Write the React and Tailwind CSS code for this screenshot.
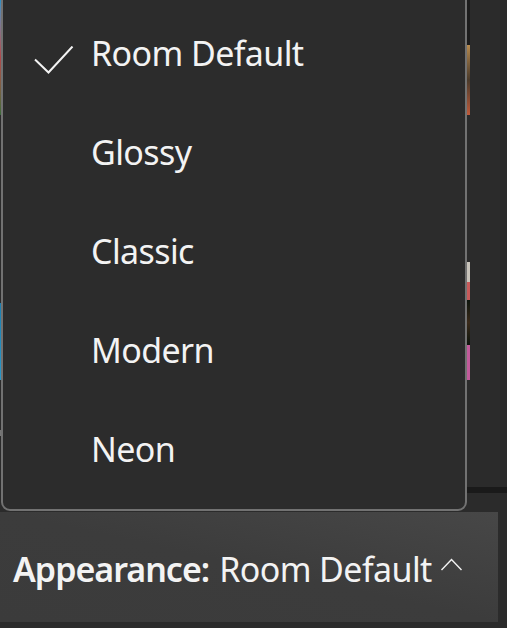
import React from "react";

const items = ["Room Default", "Glossy", "Classic", "Modern", "Neon"];

export default function App() {
  return (
    <div
      className="relative w-[507px] h-[628px] overflow-hidden bg-[#2b2b2b] text-[#f3f3f3]"
      style={{ fontFamily: '"Noto Sans", "Open Sans", sans-serif' }}
    >
      {/* background content: left edge strip */}
      <div className="absolute left-0 top-0 w-[2px] h-[490px] flex flex-col">
        <div className="h-[115px] bg-gradient-to-b from-[#2a8fc4] via-[#b0474a] to-[#3a6a3a]" />
        <div className="h-[188px] bg-[#2b2b2b]" />
        <div className="h-[77px] bg-gradient-to-b from-[#1c7fb0] to-[#2a97c8]" />
        <div className="h-[50px] bg-[#2b2b2b]" />
        <div className="h-[6px] bg-[#777]" />
      </div>
      {/* background content: right side strip */}
      <div className="absolute left-[467px] top-0 w-[3px] flex flex-col">
        <div className="h-[45px] bg-[#1c1c1c]" />
        <div className="h-[70px] bg-gradient-to-b from-[#b78a4e] via-[#4a3a2a] to-[#c05a3a]" />
        <div className="h-[147px] bg-[#2b2b2b]" />
        <div className="h-[20px] bg-[#c9c4bb]" />
        <div className="h-[18px] bg-[#c85a5a]" />
        <div className="h-[45px] bg-gradient-to-b from-[#0c140c] via-[#3a2a1a] to-[#0c140c]" />
        <div className="h-[35px] bg-[#c25a9a]" />
      </div>
      <div className="absolute left-[467px] top-[487px] w-[40px] h-[6px] bg-[#1a1a1a]" />

      {/* bottom bar */}
      <div className="absolute left-0 top-[512px] w-[498px] h-[110px] bg-gradient-to-bl from-[#474747] via-[#3c3c3c] to-[#3b3b3b] flex items-center pl-[13px] pt-[4px] text-[34px] tracking-[-0.6px]">
        <span className="font-semibold tracking-[-1px]">Appearance:</span>
        <span className="ml-[10px]">Room Default</span>
        <svg className="ml-[8px] mt-[-6px]" width="24" height="16" viewBox="0 0 24 16">
          <polyline points="1.5,12 11.5,1.5 21.5,12" fill="none" stroke="#f3f3f3" strokeWidth="1.4" />
        </svg>
      </div>

      {/* popup menu */}
      <div className="absolute left-[1px] top-[-10px] w-[466px] h-[521px] rounded-[9px] border-2 border-[#727272] bg-[#2c2c2c] flex flex-col pt-[11px]">
        {items.map((it, i) => (
          <div key={it} className="h-[99px] flex items-center shrink-0 pl-[30px]">
            <div className="w-[58px] flex items-center">
              {i === 0 && (
                <svg width="40" height="28" viewBox="0 0 40 28" className="mt-[15px] ml-[1px]">
                  <polyline points="1,13.5 14.5,26.5 38.5,0.5" fill="none" stroke="#f3f3f3" strokeWidth="2" />
                </svg>
              )}
            </div>
            <span className="text-[34px] leading-none tracking-[-0.6px]">{it}</span>
          </div>
        ))}
      </div>
    </div>
  );
}
